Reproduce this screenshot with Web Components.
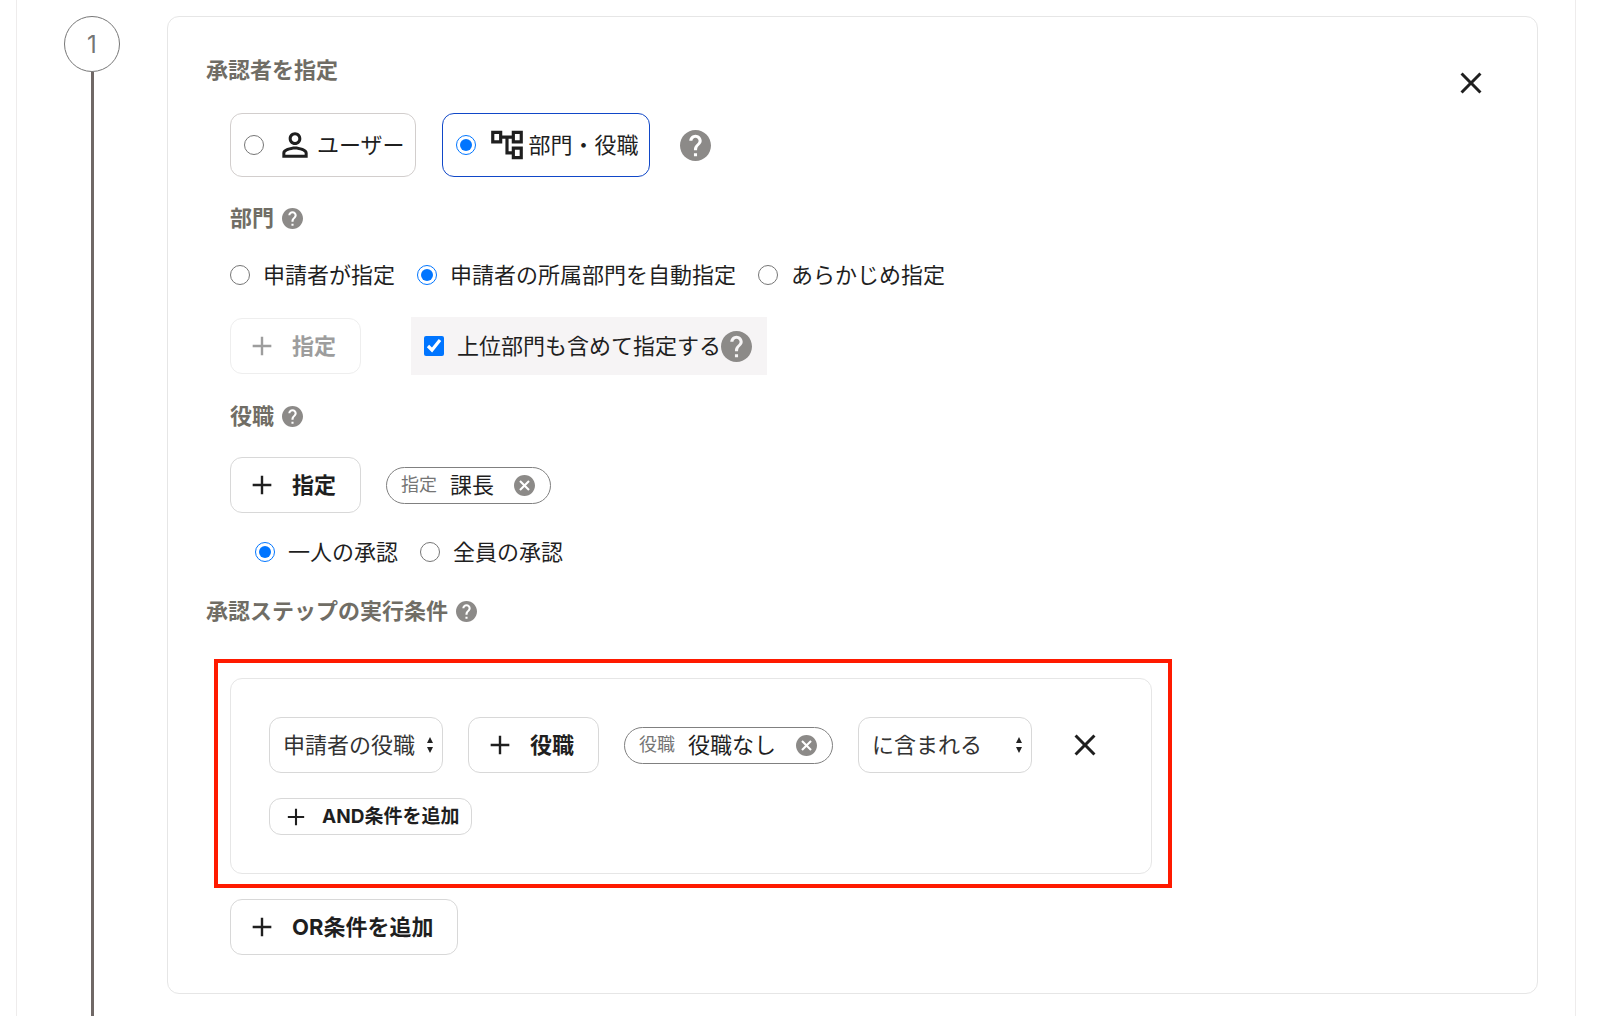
<!DOCTYPE html>
<html lang="ja">
<head>
<meta charset="utf-8">
<meta name="viewport" content="width=device-width, initial-scale=1">
<title>承認ステップ</title>
<style>
    body {
        margin: 0;
        background: #fff;
        color: #1f1f1f;
        font-family: Inter, "Noto Sans CJK JP", sans-serif;
        font-size: 22px;
        line-height: 32px;
    }
</style>
</head>
<body>
<approval-step-editor></approval-step-editor>

<script>
const ICONS = {
    plus: ['0 0 24 24', '<path d="M19 12.9h-6.1V19h-1.8v-6.1H5v-1.8h6.1V5h1.8v6.1H19z"/>'],
    close: ['0 0 24 24', '<path d="M19 6.41L17.59 5 12 10.59 6.41 5 5 6.41 10.59 12 5 17.59 6.41 19 12 13.41 17.59 19 19 17.59 13.41 12z"/>'],
    person: ['0 0 24 24', '<path d="M12 5.9c1.16 0 2.1.94 2.1 2.1s-.94 2.1-2.1 2.1S9.9 9.16 9.9 8s.94-2.1 2.1-2.1m0 9c2.97 0 6.1 1.46 6.1 2.1v1.1H5.9V17c0-.64 3.13-2.1 6.1-2.1M12 4C9.79 4 8 5.79 8 8s1.79 4 4 4 4-1.79 4-4-1.79-4-4-4zm0 9c-2.67 0-8 1.34-8 4v3h16v-3c0-2.66-5.33-4-8-4z"/>'],
    tree: ['0 0 24 24', '<path d="M22 11V3h-7v3H9V3H2v8h7V8h2v10h4v3h7v-8h-7v3h-2V8h2v3h7zM7 9H4V5h3v4zm10 6h3v4h-3v-4zm0-10h3v4h-3V5z"/>'],
    help: ['2 2 20 20', '<path d="M12 2C6.48 2 2 6.48 2 12s4.48 10 10 10 10-4.48 10-10S17.52 2 12 2zm1 17h-2v-2h2v2zm2.07-7.75l-.9.92C13.45 12.9 13 13.5 13 15h-2v-.5c0-1.1.45-2.1 1.17-2.83l1.24-1.26c.37-.36.59-.86.59-1.41 0-1.1-.9-2-2-2s-2 .9-2 2H8c0-2.21 1.79-4 4-4s4 1.79 4 4c0 .88-.36 1.68-.93 2.25z"/>'],
    cancel: ['2 2 20 20', '<path d="M12 2C6.47 2 2 6.47 2 12s4.47 10 10 10 10-4.47 10-10S17.53 2 12 2zm5 13.59L15.59 17 12 13.41 8.41 17 7 15.59 10.59 12 7 8.41 8.41 7 12 10.59 15.59 7 17 8.41 13.41 12 17 15.59z"/>'],
    sort: ['0 0 6 16', '<path d="M3 0l3 6H0zM3 16l3-6H0z"/>']
};

function icon(name, size) {
    const [box, body] = ICONS[name];
    return `<svg viewBox="${box}" width="${size}" height="${size}" fill="currentColor" aria-hidden="true">${body}</svg>`;
}

const RESET = `
    * { box-sizing: border-box; }
    svg { display: block; flex: none; }
    button, select, input { font: inherit; color: inherit; margin: 0; }
    button { background: none; border: 0; padding: 0; cursor: pointer; }
    input { width: 20px; height: 20px; flex: none; accent-color: #0075ff; }
`;

class HelpButton extends HTMLElement {
    connectedCallback() {
        const size = this.getAttribute('size') || '21';
        this.attachShadow({ mode: 'open' }).innerHTML = `
            <style>
                ${RESET}
                :host { display: block; color: #8c8a88; }
                button { display: block; border-radius: 50%; }
            </style>
            <button type="button" aria-label="ヘルプ">${icon('help', size)}</button>
        `;
    }
}

class SectionTitle extends HTMLElement {
    connectedCallback() {
        const help = this.hasAttribute('help') ? '<help-button></help-button>' : '';
        this.attachShadow({ mode: 'open' }).innerHTML = `
            <style>
                ${RESET}
                :host { display: flex; align-items: center; gap: 8px; color: #706d65; }
                h2 { margin: 0; font-size: 22px; font-weight: 700; line-height: 30px; }
            </style>
            <h2><slot></slot></h2>${help}
        `;
    }
}

class ChoiceOption extends HTMLElement {
    connectedCallback() {
        const type = this.getAttribute('type') || 'radio';
        const checked = this.hasAttribute('checked') ? 'checked' : '';
        this.attachShadow({ mode: 'open' }).innerHTML = `
            <style>
                ${RESET}
                :host { display: block; }
                label { display: flex; align-items: center; gap: 13px; }
            </style>
            <label><input type="${type}" ${checked}><span><slot></slot></span></label>
        `;
    }
}

class ChoiceCard extends HTMLElement {
    connectedCallback() {
        const checked = this.hasAttribute('checked') ? 'checked' : '';
        this.attachShadow({ mode: 'open' }).innerHTML = `
            <style>
                ${RESET}
                :host { display: block; }
                label {
                    display: flex;
                    align-items: center;
                    height: 64px;
                    padding: 0 10px 0 13px;
                    border: 1px solid #d2cecd;
                    border-radius: 12px;
                }
                label:has(input:checked) { border-color: #1148c8; }
                svg { margin: 0 3px 0 12px; }
            </style>
            <label><input type="radio" ${checked}>${icon(this.getAttribute('icon'), 38)}<span><slot></slot></span></label>
        `;
    }
}

class AddButton extends HTMLElement {
    connectedCallback() {
        const small = this.hasAttribute('small');
        const disabled = this.hasAttribute('disabled') ? 'disabled' : '';
        this.attachShadow({ mode: 'open' }).innerHTML = `
            <style>
                ${RESET}
                :host { display: block; }
                button {
                    display: flex;
                    align-items: center;
                    gap: 14px;
                    height: 56px;
                    padding: 0 24px 0 15px;
                    border: 1px solid #d8d8d8;
                    border-radius: 12px;
                    font-weight: 700;
                    white-space: nowrap;
                }
                button:disabled { color: #9d9d9d; border-color: #eee; cursor: default; }
                :host([small]) button {
                    gap: 12px;
                    height: 37px;
                    padding: 0 12px;
                    font-size: 19px;
                }
            </style>
            <button type="button" ${disabled}>${icon('plus', small ? 28 : 32)}<span><slot></slot></span></button>
        `;
    }
}

class TagChip extends HTMLElement {
    connectedCallback() {
        this.attachShadow({ mode: 'open' }).innerHTML = `
            <style>
                ${RESET}
                :host {
                    display: flex;
                    align-items: center;
                    box-sizing: border-box;
                    height: 37px;
                    padding: 0 15px 0 14px;
                    border: 1px solid #808080;
                    border-radius: 19px;
                    white-space: nowrap;
                }
                .kind { font-size: 18px; color: #757575; margin-right: 13px; }
                button { color: #8c8a88; margin-left: 20px; border-radius: 50%; }
            </style>
            <span class="kind">${this.getAttribute('kind')}</span>
            <span><slot></slot></span>
            <button type="button" aria-label="削除">${icon('cancel', 21)}</button>
        `;
    }
}

class CloseButton extends HTMLElement {
    connectedCallback() {
        this.attachShadow({ mode: 'open' }).innerHTML = `
            <style>
                ${RESET}
                :host { display: block; flex: none; }
                button { display: flex; align-items: center; justify-content: center; width: 56px; height: 56px; }
            </style>
            <button type="button" aria-label="閉じる">${icon('close', 36)}</button>
        `;
    }
}

class SelectBox extends HTMLElement {
    connectedCallback() {
        this.attachShadow({ mode: 'open' }).innerHTML = `
            <style>
                ${RESET}
                :host { display: grid; grid-template-columns: 174px; align-items: center; color: #333; }
                select, svg { grid-area: 1 / 1; }
                select {
                    appearance: none;
                    height: 56px;
                    padding: 0 24px 0 13px;
                    background: #fff;
                    border: 1px solid #d8d8d8;
                    border-radius: 12px;
                }
                svg { justify-self: end; width: 6px; margin-right: 10px; color: #222; pointer-events: none; }
            </style>
            <select aria-label="${this.getAttribute('label')}"><option>${this.getAttribute('value')}</option></select>
            ${icon('sort', 16)}
        `;
    }
}

class ConditionGroup extends HTMLElement {
    connectedCallback() {
        this.attachShadow({ mode: 'open' }).innerHTML = `
            <style>
                ${RESET}
                :host {
                    display: flex;
                    flex-direction: column;
                    align-items: flex-start;
                    gap: 25px;
                    padding: 38px;
                    border: 1px solid #e6e6e6;
                    border-radius: 12px;
                    box-sizing: border-box;
                }
                .row { display: flex; align-items: center; gap: 25px; }
            </style>
            <div class="row"><slot></slot></div>
            <slot name="footer"></slot>
        `;
    }
}

class HighlightFrame extends HTMLElement {
    connectedCallback() {
        this.attachShadow({ mode: 'open' }).innerHTML = `
            <style>
                :host {
                    display: block;
                    width: fit-content;
                    padding: 15px 16px 10px 12px;
                    border: 4px solid #ff1a00;
                }
            </style>
            <slot></slot>
        `;
    }
}

class StepPanel extends HTMLElement {
    connectedCallback() {
        this.attachShadow({ mode: 'open' }).innerHTML = `
            <style>
                ${RESET}
                :host { display: flex; gap: 47px; flex: 1; }
                .rail { display: flex; flex-direction: column; align-items: center; flex: none; }
                .number {
                    display: flex;
                    align-items: center;
                    justify-content: center;
                    width: 56px;
                    height: 56px;
                    padding-top: 2px;
                    border: 1px solid #777;
                    border-radius: 50%;
                    color: #757575;
                    font-size: 24px;
                }
                .line { flex: 1; width: 3px; background: #706866; }
                .card {
                    display: flex;
                    align-items: flex-start;
                    flex: 1;
                    margin-bottom: 22px;
                    padding: 38px;
                    border: 1px solid #e6e6e6;
                    border-radius: 12px;
                }
                .body { flex: 1; min-width: 0; }
            </style>
            <div class="rail">
                <div class="number">${this.getAttribute('number')}</div>
                <div class="line"></div>
            </div>
            <section class="card">
                <div class="body"><slot></slot></div>
                <close-button></close-button>
            </section>
        `;
    }
}

class ApprovalStepEditor extends HTMLElement {
    connectedCallback() {
        this.attachShadow({ mode: 'open' }).innerHTML = `
            <style>
                ${RESET}
                :host {
                    display: flex;
                    min-height: 100vh;
                    box-sizing: border-box;
                    margin: 0 24px 0 16px;
                    padding: 16px 37px 0 47px;
                    border: solid #eeecec;
                    border-width: 0 1px;
                }
                .approver, .sub, .assign, .conditions { display: flex; flex-direction: column; align-items: flex-start; }
                .approver { gap: 26px; margin: 28px 24px; }
                .sub { gap: 26px; }
                .assign { gap: 23px; }
                .row { display: flex; align-items: center; }
                .row.kind { gap: 30px; }
                .row.cards { gap: 26px; }
                .row.radios { gap: 22px; }
                .row.tags { gap: 25px; }
                .row.indent { margin-left: 25px; }
                .row.spread { gap: 50px; }
                .include {
                    display: flex;
                    align-items: center;
                    height: 58px;
                    padding: 0 15px 0 13px;
                    background: #f6f4f5;
                }
                .conditions { gap: 11px; margin-top: 33px; }
                .conditions > highlight-frame { margin-left: 8px; }
                .conditions > add-button { margin-left: 24px; }
            </style>
            <step-panel number="1">
                <section-title>承認者を指定</section-title>
                <div class="approver">
                    <div class="row kind">
                        <div class="row cards">
                            <choice-card icon="person">ユーザー</choice-card>
                            <choice-card icon="tree" checked>部門・役職</choice-card>
                        </div>
                        <help-button size="31"></help-button>
                    </div>
                    <div class="sub">
                        <section-title help>部門</section-title>
                        <div class="row radios">
                            <choice-option>申請者が指定</choice-option>
                            <choice-option checked>申請者の所属部門を自動指定</choice-option>
                            <choice-option>あらかじめ指定</choice-option>
                        </div>
                        <div class="row spread">
                            <add-button disabled>指定</add-button>
                            <div class="include">
                                <choice-option type="checkbox" checked>上位部門も含めて指定する</choice-option>
                                <help-button size="31"></help-button>
                            </div>
                        </div>
                    </div>
                    <div class="sub">
                        <section-title help>役職</section-title>
                        <div class="assign">
                            <div class="row tags">
                                <add-button>指定</add-button>
                                <tag-chip kind="指定">課長</tag-chip>
                            </div>
                            <div class="row radios indent">
                                <choice-option checked>一人の承認</choice-option>
                                <choice-option>全員の承認</choice-option>
                            </div>
                        </div>
                    </div>
                </div>
                <section-title help>承認ステップの実行条件</section-title>
                <div class="conditions">
                    <highlight-frame>
                        <condition-group>
                            <select-box label="条件の対象" value="申請者の役職"></select-box>
                            <add-button>役職</add-button>
                            <tag-chip kind="役職">役職なし</tag-chip>
                            <select-box label="比較方法" value="に含まれる"></select-box>
                            <close-button></close-button>
                            <add-button small slot="footer">AND条件を追加</add-button>
                        </condition-group>
                    </highlight-frame>
                    <add-button>OR条件を追加</add-button>
                </div>
            </step-panel>
        `;
    }
}

customElements.define('help-button', HelpButton);
customElements.define('section-title', SectionTitle);
customElements.define('choice-option', ChoiceOption);
customElements.define('choice-card', ChoiceCard);
customElements.define('add-button', AddButton);
customElements.define('tag-chip', TagChip);
customElements.define('close-button', CloseButton);
customElements.define('select-box', SelectBox);
customElements.define('condition-group', ConditionGroup);
customElements.define('highlight-frame', HighlightFrame);
customElements.define('step-panel', StepPanel);
customElements.define('approval-step-editor', ApprovalStepEditor);
</script>
</body>
</html>
